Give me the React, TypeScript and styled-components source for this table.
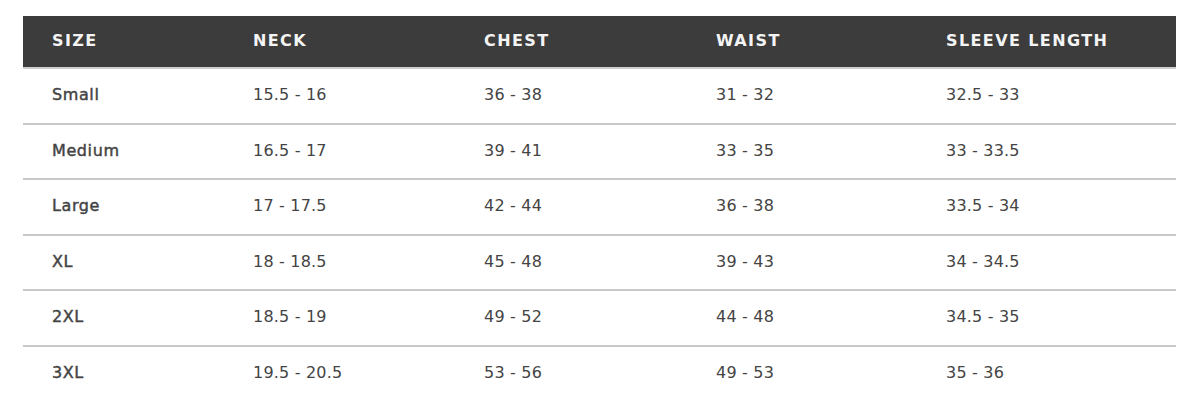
import React from "react";
import styled, { createGlobalStyle } from "styled-components";

const Global = createGlobalStyle`
  html, body { margin: 0; padding: 0; background: #ffffff; }
  body { font-family: "DejaVu Sans", "Liberation Sans", sans-serif; }
`;

const Page = styled.div`
  padding: 16px 24px 0 23px;
  width: 1200px;
  box-sizing: border-box;
`;

const Table = styled.div`
  display: flex;
  flex-direction: column;
  width: 1153px;
`;

const cols = "201px 231px 232px 230px 1fr";

const HeaderRow = styled.div`
  display: grid;
  grid-template-columns: ${cols};
  align-items: center;
  height: 51px;
  padding-left: 29px;
  background: #3c3c3c;
  border-bottom: 2px solid #cfcfcf;
`;

const HeadCell = styled.div`
  color: #f4f4f4;
  font-family: "DejaVu Sans", "Liberation Sans", sans-serif;
  font-weight: 700;
  font-size: 16px;
  letter-spacing: 1.4px;
  text-transform: uppercase;
  line-height: 20px;
  padding-bottom: 1px;
`;

const Row = styled.div<{ $last?: boolean }>`
  display: grid;
  grid-template-columns: ${cols};
  align-items: center;
  height: 53.5px;
  padding-left: 29px;
  border-bottom: ${(p) => (p.$last ? "none" : "2px solid #c9c9c9")};
`;

const Cell = styled.div<{ $first?: boolean }>`
  color: #444444;
  font-family: "DejaVu Sans", "Liberation Sans", sans-serif;
  font-size: 16px;
  font-weight: 400;
  letter-spacing: ${(p) => (p.$first ? "0.6px" : "0.2px")};
  -webkit-text-stroke: ${(p) => (p.$first ? "0.45px #444444" : "0")};
  line-height: 20px;
  padding-bottom: 1px;
`;

const headers = ["Size", "Neck", "Chest", "Waist", "Sleeve Length"];
const rows = [
  ["Small", "15.5 - 16", "36 - 38", "31 - 32", "32.5 - 33"],
  ["Medium", "16.5 - 17", "39 - 41", "33 - 35", "33 - 33.5"],
  ["Large", "17 - 17.5", "42 - 44", "36 - 38", "33.5 - 34"],
  ["XL", "18 - 18.5", "45 - 48", "39 - 43", "34 - 34.5"],
  ["2XL", "18.5 - 19", "49 - 52", "44 - 48", "34.5 - 35"],
  ["3XL", "19.5 - 20.5", "53 - 56", "49 - 53", "35 - 36"],
];

export default function App() {
  return (
    <>
      <Global />
      <Page>
        <Table>
          <HeaderRow>
            {headers.map((h) => (
              <HeadCell key={h}>{h}</HeadCell>
            ))}
          </HeaderRow>
          {rows.map((r, i) => (
            <Row key={r[0]} $last={i === rows.length - 1}>
              {r.map((c, j) => (
                <Cell key={j} $first={j === 0}>
                  {c}
                </Cell>
              ))}
            </Row>
          ))}
        </Table>
      </Page>
    </>
  );
}
